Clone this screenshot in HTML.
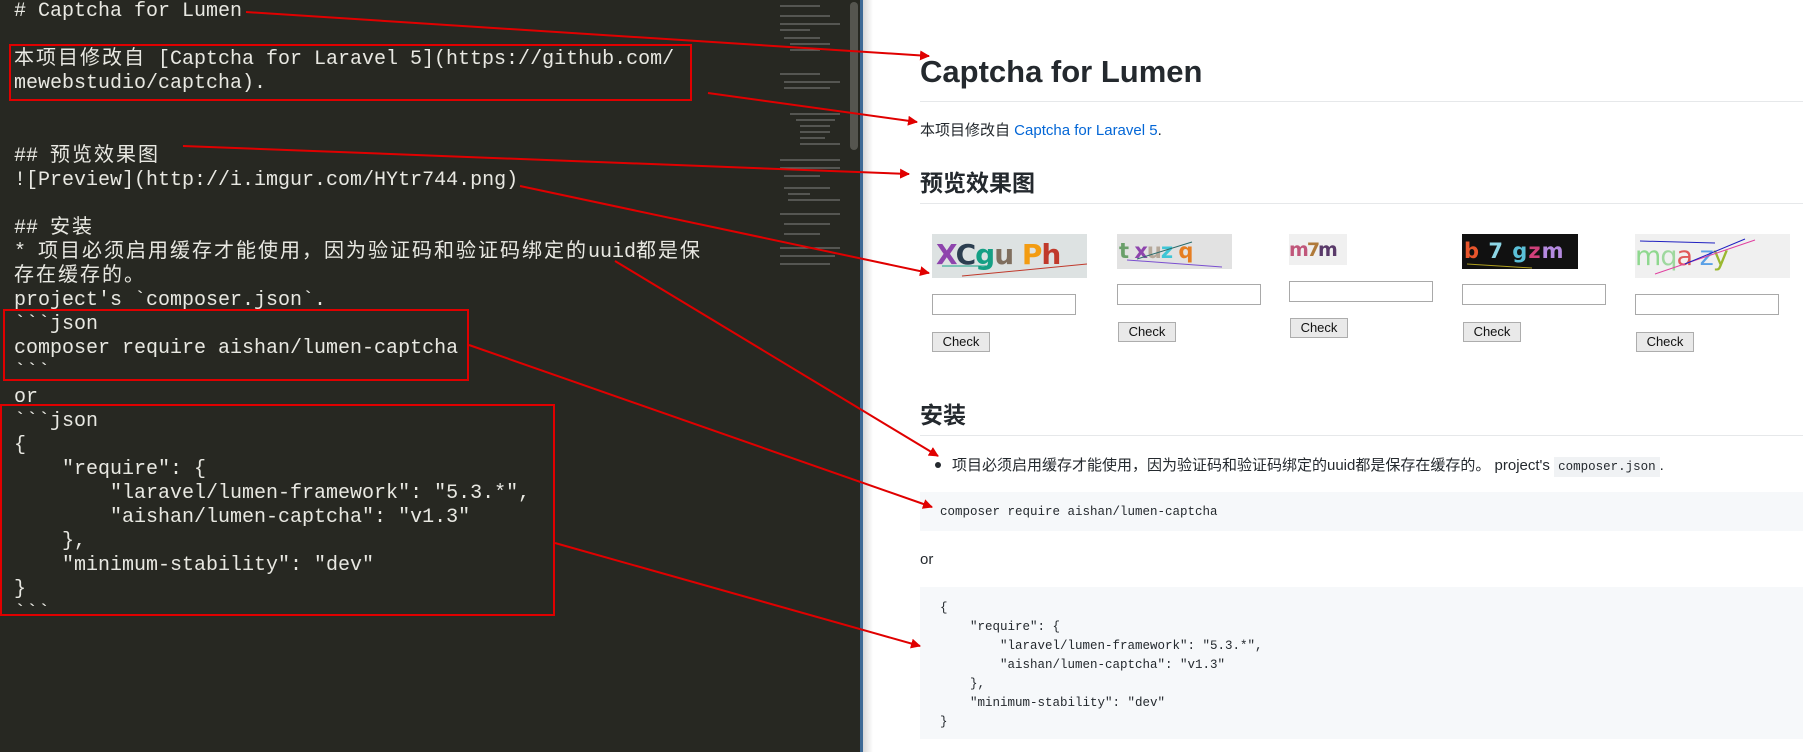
<!DOCTYPE html>
<html><head><meta charset="utf-8"><style>
*{margin:0;padding:0;box-sizing:border-box}
body{width:1820px;height:752px;overflow:hidden;background:#fff;position:relative;font-family:"Liberation Sans","Noto Sans CJK SC",sans-serif}
#left{position:absolute;left:0;top:0;width:861px;height:752px;background:#272822}
#code{position:absolute;left:14px;top:0;font-family:"Liberation Mono","Noto Sans CJK SC",monospace;font-size:20px;line-height:24.1px;color:#e8e8e2;white-space:pre}
.c{letter-spacing:2px}
#mini{position:absolute;left:780px;top:4px;width:66px;height:270px;opacity:.5}
#sb{position:absolute;left:850px;top:2px;width:8px;height:148px;background:#55554f;border-radius:4px}
#div{position:absolute;left:860px;top:0;width:3px;height:752px;background:#3e6a96}
#grad{position:absolute;left:863px;top:0;width:10px;height:752px;background:linear-gradient(90deg,#d8d8d8,#fff)}
.box{position:absolute;border:2px solid #e00000}
.r{position:absolute;left:920px;color:#24292e}
h1.r{top:52px;font-size:31px;font-weight:600;line-height:40px}
h2.r{font-size:23px;font-weight:700;line-height:30px}
.hr{position:absolute;left:920px;width:883px;height:1px;background:#e6e8ea}
.p{font-size:15px;line-height:20px}
a{color:#0366d6;text-decoration:none}
.cap{position:absolute;overflow:hidden;font-family:"DejaVu Sans",sans-serif;font-weight:bold;white-space:nowrap}
.cap svg{position:absolute;left:0;top:0}
.inp{position:absolute;width:144px;height:21px;border:1px solid #a9a9a9;background:#fff}
.btn{position:absolute;width:58px;height:20px;border:1px solid #adadad;background:#e9e9e9;font-size:13px;line-height:18px;text-align:center;color:#111}
.pre{position:absolute;left:920px;width:883px;background:#f6f8fa;font-family:"Liberation Mono",monospace;font-size:12.5px;color:#24292e;white-space:pre}
</style></head><body>
<div id="left">
<div id="code"># Captcha for Lumen

<span class="c">本项目修改自</span> [Captcha for Laravel 5](https://github.com/
mewebstudio/captcha).


## <span class="c">预览效果图</span>
![Preview](http://i.imgur.com/HYtr744.png)

## <span class="c">安装</span>
* <span class="c">项目必须启用缓存才能使用，因为验证码和验证码绑定的</span>uuid<span class="c">都是保</span>
<span class="c">存在缓存的。</span>
project's &#96;composer.json&#96;.
&#96;&#96;&#96;json
composer require aishan/lumen-captcha
&#96;&#96;&#96;
or
&#96;&#96;&#96;json
{
    "require": {
        "laravel/lumen-framework": "5.3.*",
        "aishan/lumen-captcha": "v1.3"
    },
    "minimum-stability": "dev"
}
&#96;&#96;&#96;</div>
<svg id="mini" viewBox="0 0 66 270"><g stroke="#bbb" stroke-width="1.2">
<line x1="0" y1="2" x2="40" y2="2"/><line x1="0" y1="12" x2="50" y2="12"/><line x1="0" y1="20" x2="60" y2="20"/><line x1="0" y1="26" x2="30" y2="26"/><line x1="4" y1="34" x2="40" y2="34"/><line x1="10" y1="40" x2="50" y2="40"/><line x1="10" y1="46" x2="40" y2="46"/>
<line x1="0" y1="70" x2="40" y2="70"/><line x1="4" y1="78" x2="60" y2="78"/><line x1="4" y1="84" x2="50" y2="84"/>
<line x1="10" y1="110" x2="60" y2="110"/><line x1="16" y1="116" x2="55" y2="116"/><line x1="20" y1="122" x2="50" y2="122"/><line x1="20" y1="128" x2="50" y2="128"/><line x1="20" y1="134" x2="45" y2="134"/><line x1="20" y1="140" x2="60" y2="140"/><line x1="0" y1="156" x2="60" y2="156"/><line x1="0" y1="164" x2="60" y2="164"/><line x1="4" y1="172" x2="40" y2="172"/><line x1="4" y1="184" x2="50" y2="184"/><line x1="8" y1="190" x2="30" y2="190"/><line x1="8" y1="196" x2="60" y2="196"/><line x1="0" y1="210" x2="60" y2="210"/><line x1="4" y1="220" x2="50" y2="220"/><line x1="4" y1="230" x2="40" y2="230"/><line x1="0" y1="244" x2="60" y2="244"/><line x1="0" y1="252" x2="55" y2="252"/><line x1="0" y1="260" x2="50" y2="260"/></g></svg>
<div id="sb"></div>
<div class="box" style="left:9px;top:44px;width:683px;height:57px"></div>
<div class="box" style="left:3px;top:309px;width:466px;height:72px"></div>
<div class="box" style="left:0;top:404px;width:555px;height:212px"></div>
</div>
<div id="div"></div><div id="grad"></div>

<h1 class="r">Captcha for Lumen</h1>
<div class="hr" style="top:101px"></div>
<div class="r p" style="top:121px">本项目修改自 <a>Captcha for Laravel 5</a>.</div>
<h2 class="r" style="top:168px">预览效果图</h2>
<div class="hr" style="top:203px"></div>

<div class="cap" style="left:932px;top:234px;width:155px;height:44px;background:#dde2e2;font-size:28px;line-height:42px;padding-left:4px;letter-spacing:-1px"><span style="color:#8e44ad">X</span><span style="color:#2c3e50">C</span><span style="color:#16a085">g</span><span style="color:#7f6f5f">u</span> <span style="color:#f39c12">P</span><span style="color:#c0392b">h</span><svg width="155" height="44"><line x1="30" y1="42" x2="155" y2="30" stroke="#c0392b"/><line x1="10" y1="32" x2="60" y2="32" stroke="#16a085"/></svg></div>
<div class="cap" style="left:1117px;top:234px;width:115px;height:35px;background:#e2e2e2;font-size:21px;line-height:35px;padding-left:2px;letter-spacing:-1px"><span style="color:#6a9f6a">t</span> <span style="color:#8e44ad">x</span><span style="color:#b5a89a">u</span><span style="color:#3ec6d6">z</span> <span style="color:#e67e22">q</span><svg width="115" height="35"><line x1="10" y1="26" x2="105" y2="33" stroke="#7a4fd0"/><line x1="20" y1="25" x2="75" y2="8" stroke="#2a6a6a"/></svg></div>
<div class="cap" style="left:1289px;top:234px;width:58px;height:31px;background:#f0f0f0;font-size:19px;line-height:33px;letter-spacing:-2px"><span style="color:#c0567a">m</span><span style="color:#b07a3a">7</span><span style="color:#5a3a6a">m</span></div>
<div class="cap" style="left:1462px;top:234px;width:116px;height:35px;background:#111;font-size:21px;line-height:35px;padding-left:2px;letter-spacing:1px"><span style="color:#e8552c">b</span> <span style="color:#8ed6e6">7</span> <span style="color:#5bc0d8">g</span><span style="color:#d0407a">z</span><span style="color:#b58ae0">m</span><svg width="116" height="35"><line x1="5" y1="30" x2="70" y2="34" stroke="#b0a020"/></svg></div>
<div class="cap" style="left:1635px;top:234px;width:155px;height:44px;background:#f0f0f0;font-size:27px;line-height:46px;font-weight:normal;letter-spacing:-1px"><span style="color:#8fd88f">m</span><span style="color:#9ed89e">q</span><span style="color:#e05858">a</span>  <span style="color:#5aa0e6">z</span><span style="color:#9ab830">y</span><svg width="155" height="44"><line x1="5" y1="7" x2="80" y2="9" stroke="#2020c0"/><line x1="20" y1="40" x2="120" y2="6" stroke="#e040a0"/><line x1="50" y1="30" x2="110" y2="5" stroke="#2020c0"/></svg></div>

<div class="inp" style="left:932px;top:294px"></div>
<div class="inp" style="left:1117px;top:284px"></div>
<div class="inp" style="left:1289px;top:281px"></div>
<div class="inp" style="left:1462px;top:284px"></div>
<div class="inp" style="left:1635px;top:294px"></div>
<div class="btn" style="left:932px;top:332px">Check</div>
<div class="btn" style="left:1118px;top:322px">Check</div>
<div class="btn" style="left:1290px;top:318px">Check</div>
<div class="btn" style="left:1463px;top:322px">Check</div>
<div class="btn" style="left:1636px;top:332px">Check</div>

<h2 class="r" style="top:400px">安装</h2>
<div class="hr" style="top:435px"></div>
<div style="position:absolute;left:935px;top:462px;width:6px;height:6px;border-radius:3px;background:#24292e"></div>
<div class="r p" style="left:952px;top:456px">项目必须启用缓存才能使用，因为验证码和验证码绑定的uuid都是保存在缓存的。 project's <span style="background:#f0f2f4;font-family:'Liberation Mono',monospace;font-size:12.5px;padding:3px 4px">composer.json</span>.</div>
<div class="pre" style="top:492px;height:39px;padding:12px 20px;line-height:16px">composer require aishan/lumen-captcha</div>
<div class="r p" style="top:550px">or</div>
<div class="pre" style="top:587px;height:152px;padding:12px 20px;line-height:19px">{
    "require": {
        "laravel/lumen-framework": "5.3.*",
        "aishan/lumen-captcha": "v1.3"
    },
    "minimum-stability": "dev"
}</div>

<svg style="position:absolute;left:0;top:0" width="1820" height="752">
<defs><marker id="a" markerWidth="10" markerHeight="10" refX="9" refY="5" orient="auto" markerUnits="userSpaceOnUse"><path d="M0,0 L10,5 L0,10 z" fill="#e00000"/></marker></defs>
<g stroke="#e00000" stroke-width="2" marker-end="url(#a)">
<line x1="246" y1="12" x2="929" y2="56"/>
<line x1="708" y1="93" x2="917" y2="122"/>
<line x1="183" y1="146" x2="909" y2="174"/>
<line x1="520" y1="186" x2="929" y2="273"/>
<line x1="615" y1="261" x2="938" y2="456"/>
<line x1="469" y1="345" x2="932" y2="507"/>
<line x1="555" y1="543" x2="920" y2="646"/>
</g></svg>
</body></html>
